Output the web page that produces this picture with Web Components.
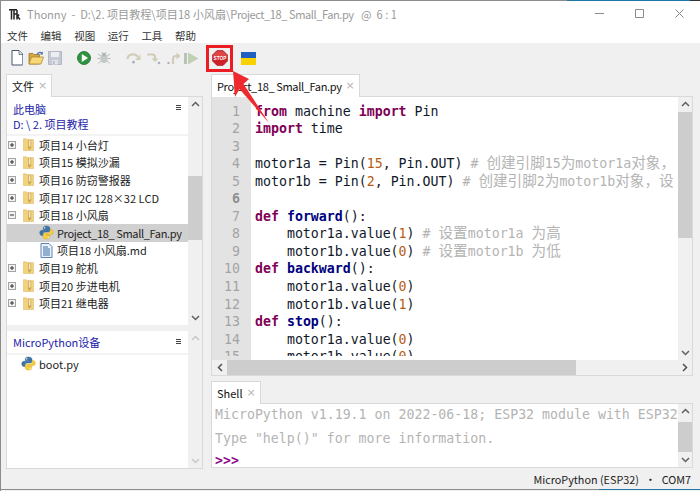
<!DOCTYPE html>
<html lang="zh"><head><meta charset="utf-8"><title>Thonny</title>
<style>
html,body{margin:0;padding:0;background:#f0f0f0}
body{width:700px;height:491px;overflow:hidden;font-family:"Noto Sans CJK SC","Noto Sans",sans-serif}
</style></head><body>
<th-app></th-app>
<script>
const UI='"Noto Sans CJK SC","Noto Sans",sans-serif';
const ICONS={
python:`<svg viewBox="0 0 16 16" width="15" height="15"><path d="M8 1C5 1 4.6 2.2 4.6 3.2V5h3.6v.6H3C1.6 5.6.8 6.8.8 8.3c0 1.6.8 3 2.2 3h1.4V9.6c0-1.2 1-2.2 2.2-2.2h3.4c1 0 1.7-.8 1.7-1.8V3.2C11.500 1.9 10.300 1 8 1z" fill="#3f74a6" stroke="#2d5a86" stroke-width=".4"/><circle cx="6.1" cy="2.9" r=".7" fill="#fff"/><path d="M8 15c3 0 3.400-1.200 3.400-2.200V11H7.800v-.6H13c1.400 0 2.200-1.200 2.200-2.700 0-1.600-.8-3-2.200-3h-1.200v1.700c0 1.200-1 2.200-2.200 2.200H6.200c-1 0-1.700.8-1.700 1.800v2.400C4.500 14.100 5.700 15 8 15z" fill="#f6cf3f" stroke="#c9a227" stroke-width=".4"/><circle cx="9.9" cy="13.1" r=".7" fill="#fff"/></svg>`,
folder:`<svg viewBox="0 0 11 13" width="11" height="13"><path d="M.4.8h3l.8.9h6.400v10.800H.4z" fill="#f3d27c" stroke="#dcbc6c" stroke-width=".6"/><path d="M5 1.700h3.200v7.800L6.400 12 5 10z" fill="#c9a65c"/><path d="M5.800 2.300h1.700v6.200H5.800z" fill="#f8e7b3"/></svg>`,
md:`<svg viewBox="0 0 13 15" width="13" height="15"><path d="M1 .5h8l3 3v11H1z" fill="#eaf1f9" stroke="#5d84b3"/><path d="M3 4h5M3 6h7M3 8h7M3 10h7M3 12h7" stroke="#3c6ca5" stroke-width="1"/></svg>`,
newdoc:`<svg viewBox="0 0 14 16" width="14" height="16"><path d="M2 .5h7l3.500 3.500v11H2z" fill="#fff" stroke="#46546b"/><path d="M9 .5v4h3.500" fill="#dde3ea" stroke="#46546b" stroke-width=".7"/><path d="M12.500 5v10" stroke="#8a97ab" stroke-width="1"/></svg>`,
open:`<svg viewBox="0 0 16 14" width="16" height="14"><path d="M1 2.500h4l1 1h5.500v9.500H1z" fill="#d7a63f" stroke="#8b6a22" stroke-width=".7"/><path d="M3.500 6h12L13 13H1z" fill="#f7d777" stroke="#a88128" stroke-width=".7"/><path d="M9 3.500c1-2 3-2.600 5-1.500" fill="none" stroke="#4b74a8" stroke-width="1.200"/><path d="M14.800 .5v3h-3z" fill="#4b74a8"/></svg>`,
save:`<svg viewBox="0 0 14 14" width="14" height="14"><path d="M.5.5h13v13H.5z" fill="#c6cad4" stroke="#b3b8c4"/><path d="M3 1h8v5H3z" fill="#eceef2"/><path d="M4 9h6v4.500H4z" fill="#e0e3e9"/><path d="M5 10h1.500v3H5z" fill="#b3b8c4"/></svg>`,
run:`<svg viewBox="0 0 14 14" width="14" height="14"><circle cx="7" cy="7" r="6.500" fill="#2f9440"/><circle cx="7" cy="7" r="6.500" fill="none" stroke="#1f6d30" stroke-width=".8"/><path d="M4.800 2.900L11 7l-6.200 4.100z" fill="#fff"/></svg>`,
debug:`<svg viewBox="0 0 14 14" width="14" height="14"><g stroke="#b9c0bb" stroke-width="1" fill="none"><path d="M1 3l3 2M13 3l-3 2M.5 7.500H3M13.500 7.500H11M1.500 12.500L4 10M12.500 12.500L10 10M5 1l1 2M9 1L8 3"/></g><ellipse cx="7" cy="7.500" rx="3.800" ry="4.500" fill="#c3cac5"/><circle cx="7" cy="3.500" r="1.800" fill="#aeb6b0"/></svg>`,
over:`<svg viewBox="0 0 15 12" width="15" height="12"><path d="M1.500 7C2 2 9 .5 12 5" fill="none" stroke="#d1cdb9" stroke-width="2.200"/><path d="M14.500 2.500v5.500H9z" fill="#d1cdb9"/><circle cx="7.500" cy="10.200" r="1.400" fill="#a9b2b8"/></svg>`,
into:`<svg viewBox="0 0 15 13" width="15" height="13"><path d="M1 2.500h5.500c2 0 2.500 1.500 2.500 3v2" fill="none" stroke="#d1cdb9" stroke-width="2.200"/><path d="M5.500 6.500h7L9 10z" fill="#d1cdb9"/><circle cx="13" cy="11" r="1.300" fill="#a9b2b8"/></svg>`,
out:`<svg viewBox="0 0 14 13" width="14" height="13"><circle cx="1.500" cy="11" r="1.200" fill="#a9b2b8"/><path d="M6 12V7c0-2 1-3 3-3h1" fill="none" stroke="#d1cdb9" stroke-width="2.200"/><path d="M9.500 .5v7L13.500 4z" fill="#d1cdb9"/></svg>`,
resume:`<svg viewBox="0 0 15 13" width="15" height="13"><rect x="0" y="1" width="3" height="11" fill="#b9c3b3"/><path d="M4 .5L14.500 6.500 4 12.500z" fill="#bfd0b5"/></svg>`,
stop:`<svg viewBox="0 0 16 16" width="16" height="16"><path d="M5 .5h6L15.500 5v6L11 15.500H5L.5 11V5z" fill="#cf2027" stroke="#9c1b20" stroke-width=".6"/><path d="M5 1.200h6L14.800 5v1.500H1.200V5z" fill="#e8605a" opacity=".6"/><text x="8" y="10" text-anchor="middle" font-family="Liberation Sans,sans-serif" font-weight="bold" font-size="4.800" fill="#fff">STOP</text></svg>`,
logo:`<svg viewBox="0 0 12 11" width="12" height="11"><path d="M0 .8h8M2.500.8V10.500M5 .8V10.500M5 5h3M8 1v9.500M10 5.500L8.500 7.500 11 10.500" fill="none" stroke="#222" stroke-width="1.500"/></svg>`
};
class ThIcon extends HTMLElement{connectedCallback(){if(this.shadowRoot)return;const s=this.attachShadow({mode:'open'});s.innerHTML=`<style>:host{display:inline-flex;align-items:center;justify-content:center;flex:none;line-height:0}</style>${ICONS[this.getAttribute('name')]||''}`;}}
customElements.define('th-icon',ThIcon);

class ThTitlebar extends HTMLElement{connectedCallback(){const s=this.attachShadow({mode:'open'});s.innerHTML=`<style>
:host{display:flex;align-items:flex-start;height:28px;background:#fff;padding-left:8px;font:11.100px/14px ${UI};color:#9a9a9a;white-space:pre}
th-icon{margin-top:8px}
.t{margin-left:6px;flex:1;margin-top:6px}
.p{letter-spacing:-.45px}
.btns{display:flex;margin-right:1px}
.b{width:40px;display:flex;justify-content:center;padding-top:8px}
</style><th-icon name="logo"></th-icon><span class="t">Thonny  -  D:\\2. 项目教程\\项目18 小风扇\\<span class="p">Project_18_ Small_Fan.py</span>   @  6 : 1</span>
<div class="btns">
<div class="b"><svg width="9" height="9"><path d="M0 4.500h9" stroke="#8a8a8a"/></svg></div>
<div class="b"><svg width="9" height="9"><path d="M.5.500h8v8h-8z" fill="none" stroke="#8a8a8a"/></svg></div>
<div class="b"><svg width="9" height="9"><path d="M.5.500l8 8M8.500.500l-8 8" stroke="#8a8a8a"/></svg></div></div>`;}}
customElements.define('th-titlebar',ThTitlebar);

class ThMenubar extends HTMLElement{connectedCallback(){const s=this.attachShadow({mode:'open'});s.innerHTML=`<style>
:host{display:flex;height:14px;background:#fff;padding-left:6px;gap:12.600px;font:10.500px/14px ${UI};color:#333}
</style><span>文件</span><span>编辑</span><span>视图</span><span>运行</span><span>工具</span><span>帮助</span>`;}}
customElements.define('th-menubar',ThMenubar);

class ThToolbar extends HTMLElement{connectedCallback(){const s=this.attachShadow({mode:'open'});
const items=[['newdoc',9,14],['open',27,16],['save',47,14],['run',76,14],['debug',96,14],['over',125,15],['into',145,15],['out',166,14],['resume',183,15],['stop',211,16]];
let x=0,h='';for(const [n,l,w] of items){h+=`<th-icon name="${n}" style="margin-left:${l-x}px"></th-icon>`;x=l+w;}
s.innerHTML=`<style>:host{display:flex;align-items:center;height:31px;background:#f0f0f0;padding-bottom:1px;box-sizing:border-box}
.flag{width:15px;height:13px;margin-left:13px;background:linear-gradient(#1f5fbf 50%,#f7d200 50%)}</style>${h}<div class="flag"></div>`;}}
customElements.define('th-toolbar',ThToolbar);

class ThTab extends HTMLElement{connectedCallback(){const s=this.attachShadow({mode:'open'});s.innerHTML=`<style>
:host{display:flex;box-sizing:border-box;height:23px;margin-bottom:-1px;position:relative;z-index:1;width:max-content;background:#fff;border:1px solid #d9d9d9;border-bottom:0;padding:0 4px 0 5px;align-items:center;font:11px/14px ${UI};color:#111;white-space:pre}
.x{margin-left:4px;color:#b5b5b5;font-size:11px;font-family:"DejaVu Sans",sans-serif;letter-spacing:0}
</style><slot></slot><span class="x">×</span>`;}}
customElements.define('th-tab',ThTab);

class ThVscroll extends HTMLElement{connectedCallback(){const s=this.attachShadow({mode:'open'});const t=+this.getAttribute('top')||0,h=+this.getAttribute('size')||0;const c=this.getAttribute('dim')?'#c8c8c8':'#606060';s.innerHTML=`<style>
:host{display:flex;flex-direction:column;width:14px;flex:none;background:#f0f0f0;box-sizing:border-box}
.a{height:14px;display:flex;align-items:center;justify-content:center;flex:none}
.tr{flex:1;position:relative;min-height:0;overflow:hidden}
.th{margin-top:${t}px;height:${h}px;background:#cdcdcd}
</style><div class="a"><svg width="9" height="6"><path d="M1 5l3.500-3.500L8 5" fill="none" stroke="${c}" stroke-width="1.500"/></svg></div><div class="tr"><div class="th"></div></div><div class="a"><svg width="9" height="6"><path d="M1 1l3.500 3.500L8 1" fill="none" stroke="${c}" stroke-width="1.500"/></svg></div>`;}}
customElements.define('th-vscroll',ThVscroll);

class ThHscroll extends HTMLElement{connectedCallback(){const s=this.attachShadow({mode:'open'});s.innerHTML=`<style>
:host{display:flex;height:15px;background:#f0f0f0;flex:none}
.a{width:15px;display:flex;align-items:center;justify-content:center;flex:none}
.tr{flex:1}.th{margin-left:0;width:349px;height:15px;background:#cdcdcd}
</style><div class="a"><svg width="6" height="9"><path d="M5 1L1.500 4.500 5 8" fill="none" stroke="#505050" stroke-width="1.500"/></svg></div><div class="tr"><div class="th"></div></div><div class="a"><svg width="6" height="9"><path d="M1 1l3.500 3.500L1 8" fill="none" stroke="#505050" stroke-width="1.500"/></svg></div>`;}}
customElements.define('th-hscroll',ThHscroll);

class ThRow extends HTMLElement{connectedCallback(){const s=this.attachShadow({mode:'open'});const exp=this.getAttribute('exp'),ic=this.getAttribute('icon'),lvl=+this.getAttribute('level')||0;
const box=exp?`<svg width="8" height="8" class="bx"><rect x=".5" y=".5" width="7" height="7" fill="#f2f2f2" stroke="#a3a3a3"/><path d="M2 4h4${exp==='+'?'M4 2v4':''}" stroke="#333"/></svg>`:'<span class="bx"></span>';
const ml=lvl===1?23:lvl===2?5:7, mr=ic==='folder'?5:3;
s.innerHTML=`<style>
:host{display:flex;align-items:center;height:17.600px;font:11px/14px ${UI};color:#222;white-space:pre;box-sizing:border-box}
:host([sel]){background:#d0d0d0}
.bx{display:block;width:8px;height:8px;margin-left:1px;flex:none}
.ic{margin-left:${ml}px;margin-right:${mr}px;width:${ic==='folder'?11:15}px;display:flex;justify-content:center}
</style>${box}<div class="ic"><th-icon name="${ic}"></th-icon></div><slot></slot>`;}}
customElements.define('th-row',ThRow);

class ThPanelHead extends HTMLElement{connectedCallback(){const s=this.attachShadow({mode:'open'});s.innerHTML=`<style>
:host{display:block;position:relative;color:#2222aa;font:11px/15px ${UI};padding:5px 6px 4px;box-sizing:border-box;border-bottom:2px solid #f3f3f3}
.m{position:absolute;right:7px;top:8px;width:5px;height:5px;border-top:1px solid #444;border-bottom:1px solid #444;box-sizing:border-box}
.m:after{content:"";display:block;height:1px;margin-top:1px;background:#444}
</style><slot></slot><div class="m"></div>`;}}
customElements.define('th-panel-head',ThPanelHead);

class ThFiles extends HTMLElement{connectedCallback(){const s=this.attachShadow({mode:'open'});s.innerHTML=`<style>
:host{display:flex;flex-direction:column;width:197px;flex:none}
.frame{flex:1;display:flex;flex-direction:column;border:1px solid #d9d9d9;background:#f0f0f0;min-height:0}
.up{height:228px;display:flex;background:#fff}
.lo{flex:1;display:flex;background:#fff;margin-top:6px;min-height:0}
.c{flex:1;min-width:0;overflow:hidden}
th-panel-head.a{height:39px;line-height:14.500px}
th-panel-head.b{height:24px;padding-top:4px}
</style><th-tab>文件</th-tab><div class="frame"><div class="up"><div class="c"><th-panel-head class="a"><div>此电脑</div><div>D: \\ 2. 项目教程</div></th-panel-head><div>
<th-row exp="+" icon="folder">项目14 小台灯</th-row>
<th-row exp="+" icon="folder">项目15 模拟沙漏</th-row>
<th-row exp="+" icon="folder">项目16 防窃警报器</th-row>
<th-row exp="+" icon="folder">项目17 I2C 128×32 LCD</th-row>
<th-row exp="-" icon="folder">项目18 小风扇</th-row>
<th-row level="1" sel icon="python" style="letter-spacing:-.35px">Project_18_ Small_Fan.py</th-row>
<th-row level="1" icon="md">项目18 小风扇.md</th-row>
<th-row exp="+" icon="folder">项目19 舵机</th-row>
<th-row exp="+" icon="folder">项目20 步进电机</th-row>
<th-row exp="+" icon="folder">项目21 继电器</th-row>
</div></div><th-vscroll top="65" size="64"></th-vscroll></div>
<div class="lo"><div class="c"><th-panel-head class="b">MicroPython设备</th-panel-head><th-row level="2" icon="python">boot.py</th-row></div><th-vscroll dim="1"></th-vscroll></div></div>`;}}
customElements.define('th-files',ThFiles);

const cj=t=>`<span class="cj">${t}</span>`;
const K=t=>`<b class="k">${t}</b>`,F=t=>`<b class="f">${t}</b>`,N=t=>`<span class="n">${t}</span>`;
const C=h=>`<span class="c">${h}</span>`;
const CODE=[
`${K('from')} machine ${K('import')} Pin`,
`${K('import')} time`,
``,
`motor1a = Pin(${N(15)}, Pin.OUT) ${C(`# ${cj('创建引脚')}15${cj('为')}motor1a${cj('对象，')}`)}`,
`motor1b = Pin(${N(2)}, Pin.OUT) ${C(`# ${cj('创建引脚')}2${cj('为')}motor1b${cj('对象，设')}`)}`,
``,
`${K('def')} ${F('forward')}():`,
`    motor1a.value(${N(1)}) ${C(`# ${cj('设置')}motor1a ${cj('为高')}`)}`,
`    motor1b.value(${N(0)}) ${C(`# ${cj('设置')}motor1b ${cj('为低')}`)}`,
`${K('def')} ${F('backward')}():`,
`    motor1a.value(${N(0)})`,
`    motor1b.value(${N(1)})`,
`${K('def')} ${F('stop')}():`,
`    motor1a.value(${N(0)})`,
`    motor1b.value(${N(0)})`];
const MONO='"DejaVu Sans Mono","Noto Sans CJK SC",monospace';
class ThEditor extends HTMLElement{connectedCallback(){const s=this.attachShadow({mode:'open'});
s.innerHTML=`<style>
:host{display:flex;flex-direction:column;height:280px;border:1px solid #d9d9d9;box-sizing:border-box;background:#f0f0f0;flex:none}
.top{flex:1;display:flex;min-height:0}
.g{width:39px;flex:none;background:#e3e3e3;font:13.250px/17.550px ${MONO};color:#a3a3a3;text-align:right;padding:5.500px 11px 4.500px 0;box-sizing:border-box}
.clip{height:100%;overflow:hidden}
.g .cur{font-weight:bold;color:#8f8f8f}
.code{flex:1;min-width:0;background:#fff;padding:5.500px 0 4.500px 4px;box-sizing:border-box;font:13.250px/17.550px ${MONO};color:#101828;white-space:pre;overflow:hidden}
.l{height:17.550px}
.k{color:#7f0055;font-weight:bold}.f{color:#000080;font-weight:bold}.n{color:#b85c14}.c{color:#b4b4b4}
.cj{font-size:14.600px;line-height:10px}
</style><div class="top"><div class="g"><div class="clip">${CODE.map((_,i)=>`<div class="l${i==5?' cur':''}">${i+1}</div>`).join('')}</div></div><div class="code"><div class="clip">${CODE.map(l=>`<div class="l">${l}</div>`).join('')}</div></div><th-vscroll top="1" size="126"></th-vscroll></div><th-hscroll></th-hscroll>`;}}
customElements.define('th-editor',ThEditor);

class ThShell extends HTMLElement{connectedCallback(){const s=this.attachShadow({mode:'open'});
s.innerHTML=`<style>
:host{display:flex;height:65px;border:1px solid #d9d9d9;box-sizing:border-box;background:#fff;flex:none}
.t{flex:1;min-width:0;overflow:hidden;padding:2px 0 0 3px;font:13.250px/18px ${MONO};color:#b4b4b4;white-space:pre}
.t div{height:24px}
.p{color:#8b0a8b;font-weight:bold;margin-top:-2px}
</style><div class="t"><div>MicroPython v1.19.1 on 2022-06-18; ESP32 module with ESP32</div><div>Type "help()" for more information.</div><div class="p">&gt;&gt;&gt;</div></div><th-vscroll top="4" size="30"></th-vscroll>`;}}
customElements.define('th-shell',ThShell);

class ThStatus extends HTMLElement{connectedCallback(){const s=this.attachShadow({mode:'open'});s.innerHTML=`<style>
:host{display:flex;justify-content:flex-end;align-items:center;height:20px;font:10.800px/14px ${UI};color:#222;padding-right:9px;white-space:pre}
.d{margin:0 6px}
</style><span>MicroPython (ESP32)</span><span class="d">•</span><span>COM7</span>`;}}
customElements.define('th-status',ThStatus);

class ThAnnotation extends HTMLElement{connectedCallback(){const s=this.attachShadow({mode:'open'});s.innerHTML=`<style>
:host{position:absolute;left:0;top:0;width:0;height:0;pointer-events:none;z-index:5}
svg{position:absolute;left:-1px;top:0;overflow:visible}
</style><svg width="700" height="491"><rect x="207.500" y="46.500" width="24" height="24" fill="none" stroke="#ec1c24" stroke-width="3"/><path d="M233 71L249 79 243.500 84 269 123 239.500 89 235 97z" fill="#ee2a2e"/></svg>`;}}
customElements.define('th-annotation',ThAnnotation);

class ThApp extends HTMLElement{connectedCallback(){const s=this.attachShadow({mode:'open'});s.innerHTML=`<style>
:host{display:flex;flex-direction:column;width:700px;height:491px;box-sizing:border-box;position:relative;background:#f0f0f0;border-left:1px solid #8c8c8c}
.edge{height:1px;flex:none;background:linear-gradient(90deg,#8c8c8c 0 81%,#1f78a8 81% 98.500%,#333 98.500%)}
.edge.b{background:linear-gradient(90deg,#8c8c8c 0 85.500%,#1f78a8 85.500%)}
.main{display:flex;height:395px;padding:0 7px 0 5px;gap:8px;flex:none}
.right{flex:1;min-width:0;display:flex;flex-direction:column}
.gap{height:5px;flex:none}
</style><div class="edge"></div><th-titlebar></th-titlebar><th-menubar></th-menubar><th-toolbar></th-toolbar>
<div class="main"><th-files></th-files><div class="right"><th-tab style="letter-spacing:-.35px">Project_18_ Small_Fan.py</th-tab><th-editor></th-editor><div class="gap"></div><th-tab>Shell</th-tab><th-shell></th-shell></div></div>
<th-status></th-status><div class="edge b"></div><th-annotation></th-annotation>`;}}
customElements.define('th-app',ThApp);
</script></body></html>
